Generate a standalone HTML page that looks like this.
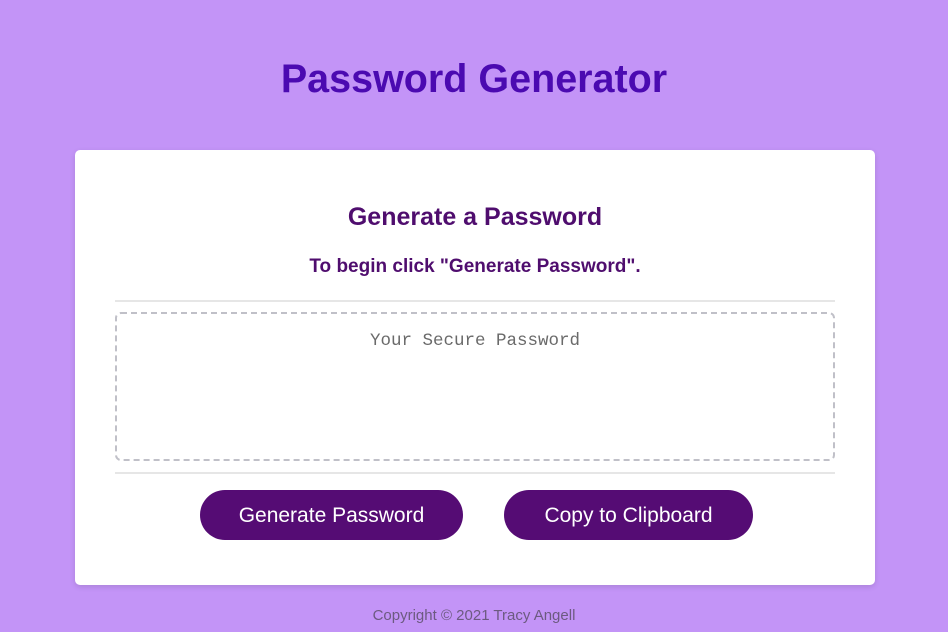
<!DOCTYPE html>
<html><head><style>
body{margin:0;width:948px;height:632px;background:#c394f7;font-family:"Liberation Sans",sans-serif;position:relative;overflow:hidden}
h1{position:absolute;top:57px;left:0;width:948px;text-align:center;margin:0;font-size:39.5px;color:#4b0ab1;font-weight:bold;line-height:44px}
.card{position:absolute;left:75px;top:150px;width:800px;height:435px;background:#fff;border-radius:5px;box-shadow:0 2px 6px rgba(0,0,0,.12)}
h2{position:absolute;top:52px;left:0;width:800px;text-align:center;margin:0;font-size:25px;color:#4f0d6e;line-height:30px}
p{position:absolute;top:106px;left:0;width:800px;text-align:center;margin:0;font-size:19px;font-weight:bold;color:#4f0d6e}
.hr{position:absolute;left:40px;width:720px;height:2px;background:#e6e6e6}
.box{position:absolute;left:40px;top:162px;width:716px;border:2px dashed #c0c0c8;border-radius:6px;text-align:center;font-family:"Liberation Mono",monospace;font-size:17.5px;color:#6a6a6a;padding-top:17px;height:128px}
.btn{position:absolute;top:340px;height:50px;border-radius:25px;background:#550c74;color:#fff;font-size:21px;text-align:center;line-height:52px}
.foot{position:absolute;top:607px;left:0;width:948px;text-align:center;color:#6c5a80;font-size:15px}
</style></head><body>
<h1>Password Generator</h1>
<div class="card">
<h2>Generate a Password</h2>
<p>To begin click "Generate Password".</p>
<div class="hr" style="top:150px"></div>
<div class="box">Your Secure Password</div>
<div class="hr" style="top:322px"></div>
<div class="btn" style="left:125px;width:263px">Generate Password</div>
<div class="btn" style="left:429px;width:249px">Copy to Clipboard</div>
</div>
<div class="foot">Copyright © 2021 Tracy Angell</div>
</body></html>
